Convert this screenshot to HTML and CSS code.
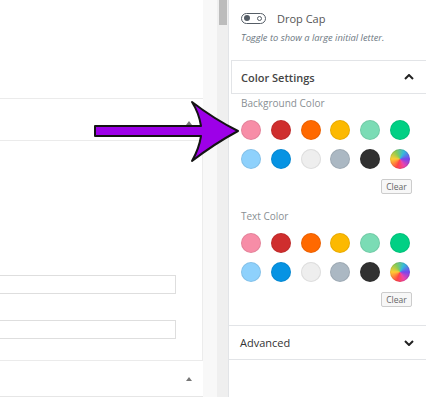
FILE: index.html
```html
<!DOCTYPE html>
<html lang="en">
<head>
    <meta charset="UTF-8">
    <meta name="viewport" content="width=device-width, initial-scale=1.0">
    <title>Color Settings</title>
    <link rel="stylesheet" href="styles.css">
</head>
<body>
    <div class="screen">
        <div class="editor">
            <div class="editor-top"></div>
            <div class="panel-row"><span class="tri"></span></div>
            <div class="editor-body">
                <div class="field"></div>
                <div class="field second"></div>
            </div>
            <div class="panel-row bottom"><span class="tri"></span></div>
        </div>
        <div class="gutter"></div>
        <div class="scrollbar"><div class="thumb"></div></div>
        <div class="sidebar">
            <div class="toggle-row">
                <span class="toggle"><span class="knob"></span><span class="ring"></span></span>
                <span class="toggle-label">Drop Cap</span>
            </div>
            <p class="help">Toggle to show a large initial letter.</p>

            <div class="section-head open">
                <span>Color Settings</span>
                <svg width="10" height="6" viewBox="0 0 10 6"><path d="M1 5 L5 1 L9 5" fill="none" stroke="#222" stroke-width="2"/></svg>
            </div>
            <div class="colors">
                <div class="group-label">Background Color</div>
                <div class="swatches">
                    <span class="dot pink"></span><span class="dot red"></span><span class="dot orange"></span>
                    <span class="dot amber"></span><span class="dot mint"></span><span class="dot green"></span>
                    <span class="dot sky"></span><span class="dot blue"></span><span class="dot light"></span>
                    <span class="dot gray"></span><span class="dot dark"></span><span class="dot custom"></span>
                </div>
                <div class="clear-row"><button class="clear">Clear</button></div>

                <div class="group-label text">Text Color</div>
                <div class="swatches">
                    <span class="dot pink"></span><span class="dot red"></span><span class="dot orange"></span>
                    <span class="dot amber"></span><span class="dot mint"></span><span class="dot green"></span>
                    <span class="dot sky"></span><span class="dot blue"></span><span class="dot light"></span>
                    <span class="dot gray"></span><span class="dot dark"></span><span class="dot custom"></span>
                </div>
                <div class="clear-row"><button class="clear">Clear</button></div>
            </div>

            <div class="section-head">
                <span>Advanced</span>
                <svg width="10" height="6" viewBox="0 0 10 6"><path d="M1 1 L5 5 L9 1" fill="none" stroke="#222" stroke-width="2"/></svg>
            </div>
        </div>

        <svg class="arrow" width="150" height="64" viewBox="92 100 150 64">
            <path d="M95 126 L201 126 Q199 113 192 102 Q214 119 238 131 Q214 144 192 161 Q199 149 201 136 L95 136 Z" fill="#9d00e8" stroke="#141414" stroke-width="2" stroke-linejoin="round"/>
        </svg>
    </div>
</body>
</html>
```

FILE: styles.css
```css
body {
    margin: 0;
    font-family: "Open Sans", "Noto Sans", Arial, sans-serif;
    background-color: #fff;
}
.screen {
    position: relative;
    display: flex;
    width: 426px;
    height: 397px;
    overflow: hidden;
}
.editor {
    width: 203px;
    display: flex;
    flex-direction: column;
}
.editor-top {
    height: 98px;
}
.panel-row {
    height: 41px;
    border-top: 1px solid #ebebeb;
    border-bottom: 1px solid #ebebeb;
    position: relative;
}
.panel-row.bottom {
    height: 35px;
    border-bottom: 1px solid #e6e6e6;
}
.tri {
    position: absolute;
    left: 186px;
    top: 22px;
    border-left: 3px solid transparent;
    border-right: 3px solid transparent;
    border-bottom: 4px solid #777;
}
.panel-row.bottom .tri {
    top: 16px;
}
.editor-body {
    height: 219px;
    border-right: 1px solid #ececec;
    padding-top: 134px;
    box-sizing: border-box;
}
.field {
    width: 177px;
    height: 19px;
    margin-left: -1px;
    border: 1px solid #dedede;
    box-sizing: border-box;
}
.field.second {
    margin-top: 26px;
}
.gutter {
    width: 14px;
    background-color: #f8f8f8;
}
.scrollbar {
    width: 11px;
    background-color: #efefef;
}
.thumb {
    width: 8px;
    height: 25px;
    margin-left: 2px;
    background-color: #bcbcbc;
}
.sidebar {
    flex: 1;
    border-left: 1px solid #e2e4e7;
}
.toggle-row {
    display: flex;
    align-items: center;
    height: 12px;
    margin-top: 12px;
    padding-left: 12px;
}
.toggle {
    position: relative;
    width: 23px;
    height: 9px;
    border: 1.5px solid #555d66;
    border-radius: 7px;
}
.knob {
    position: absolute;
    left: 2px;
    top: 1.5px;
    width: 6px;
    height: 6px;
    border-radius: 50%;
    background-color: #555d66;
}
.ring {
    position: absolute;
    right: 3px;
    top: 2px;
    width: 3px;
    height: 3px;
    border: 1px solid #555d66;
    border-radius: 50%;
}
.toggle-label {
    margin-left: 11px;
    font-size: 11px;
    color: #555;
}
.help {
    margin: 8px 0 0 12px;
    font-size: 9.3px;
    font-style: italic;
    color: #6c7781;
    line-height: 12px;
}
.section-head {
    display: flex;
    justify-content: space-between;
    align-items: center;
    height: 32px;
    padding: 0 12px 0 9px;
    border-top: 1px solid #e2e4e7;
    border-bottom: 1px solid #e2e4e7;
    font-size: 11px;
    font-weight: 600;
    color: #23282d;
}
.section-head.open {
    margin-top: 16px;
    margin-left: 2px;
    border-left: 1px solid #e2e4e7;
    color: #444;
}
.section-head:not(.open) {
    height: 33px;
    padding-left: 11px;
    font-weight: 400;
    color: #333;
}
.colors {
    padding: 2px 12px 18px 12px;
}
.group-label {
    font-size: 10px;
    color: #8a8f94;
    line-height: 14px;
}
.group-label.text {
    margin-top: 15px;
}
.swatches {
    display: grid;
    grid-template-columns: repeat(6, 20px);
    column-gap: 9.8px;
    row-gap: 9px;
    margin-top: 10px;
}
.dot {
    width: 20px;
    height: 20px;
    border-radius: 50%;
    box-shadow: inset 0 0 0 1px rgba(0, 0, 0, 0.08);
}
.pink { background-color: #f78da7; }
.red { background-color: #cf2e2e; }
.orange { background-color: #ff6900; }
.amber { background-color: #fcb900; }
.mint { background-color: #7bdcb5; }
.green { background-color: #00d084; }
.sky { background-color: #8ed1fc; }
.blue { background-color: #0693e3; }
.light { background-color: #eeeeee; box-shadow: inset 0 0 0 1px #dedede; }
.gray { background-color: #abb8c3; }
.dark { background-color: #313131; }
.custom {
    background: conic-gradient(from 200deg, #f44 0deg, #fc3 70deg, #8c5 130deg, #3bd 190deg, #74e 250deg, #e4a 310deg, #f44 360deg);
}
.clear-row {
    display: flex;
    justify-content: flex-end;
    margin-top: 10px;
    padding-right: 2px;
}
.clear {
    width: 31px;
    height: 15px;
    padding: 0;
    font-family: inherit;
    font-size: 8.5px;
    color: #666;
    background-color: #f7f7f7;
    border: 1px solid #ccc;
    border-radius: 2px;
}
.arrow {
    position: absolute;
    left: 92px;
    top: 100px;
}
```
